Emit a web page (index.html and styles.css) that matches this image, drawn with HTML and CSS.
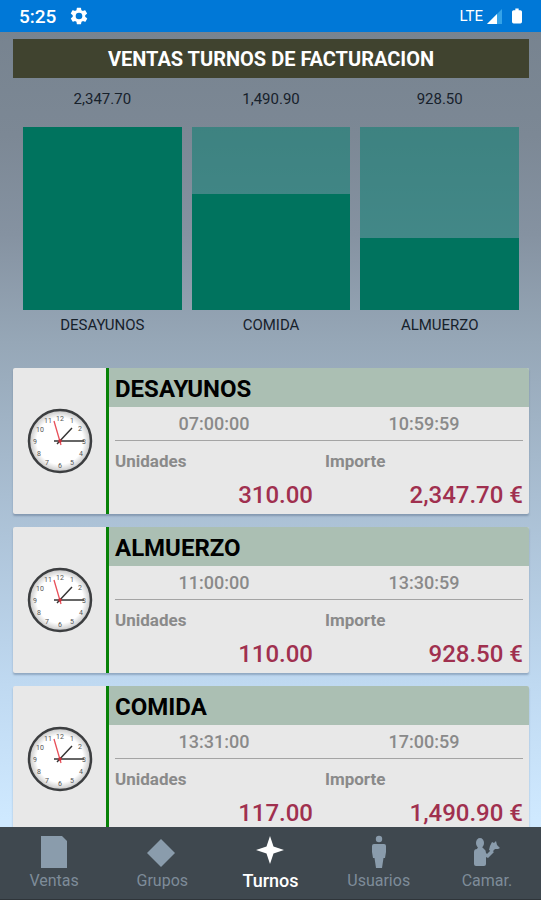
FILE: index.html
```
<!DOCTYPE html>
<html lang="es">
<head>
    <meta charset="UTF-8">
    <meta name="viewport" content="width=device-width, initial-scale=1.0">
    <title>Ventas turnos de facturacion</title>
    <link rel="stylesheet" href="styles.css">
</head>
<body>
    <!-- Esfera del reloj, compartida por todas las tarjetas -->
    <svg class="defs" aria-hidden="true">
        <defs>
            <radialGradient id="esfera">
                <stop offset="0.75" stop-color="#ffffff"/>
                <stop offset="1" stop-color="#c4c4c4"/>
            </radialGradient>
            <symbol id="reloj" viewBox="0 0 66 66">
                <circle cx="33" cy="33" r="31" fill="url(#esfera)" stroke="#3c3e40" stroke-width="2.500"/>
                <g class="reloj-numeros">
                    <text x="33" y="13">12</text>
                    <text x="45" y="15">1</text>
                    <text x="53" y="23">2</text>
                    <text x="57" y="36">3</text>
                    <text x="54" y="48">4</text>
                    <text x="45" y="57">5</text>
                    <text x="33" y="60">6</text>
                    <text x="20" y="57">7</text>
                    <text x="12" y="48">8</text>
                    <text x="8" y="36">9</text>
                    <text x="13" y="24">10</text>
                    <text x="21" y="15">11</text>
                </g>
                <path d="M30 36L45 20" stroke="#333" stroke-width="1.400"/>
                <path d="M27 33H57" stroke="#333" stroke-width="1.600"/>
                <path d="M34 37L27 13" stroke="#e8505a" stroke-width="1.300"/>
                <circle cx="33" cy="33" r="1.800" fill="#c9303c"/>
            </symbol>
        </defs>
    </svg>

    <div class="app">
        <header class="status-bar">
            <span class="hora">5:25</span>
            <svg class="icono-ajustes" viewBox="0 0 24 24" width="20" height="20" fill="#fff">
                <path d="M19.4 13a7.5 7.5 0 0 0 0-2l2.1-1.6c.2-.2.2-.4.1-.6l-2-3.5c-.1-.2-.4-.3-.6-.2l-2.5 1a7.300 7.300 0 0 0-1.700-1l-.4-2.600a.5.5 0 0 0-.5-.5h-4a.5.5 0 0 0-.5.4L9 5a7.700 7.700 0 0 0-1.700 1l-2.400-1c-.3 0-.5 0-.7.200l-2 3.500c0 .2 0 .5.2.6L4.500 11a7.900 7.900 0 0 0 0 2l-2.100 1.600c-.2.2-.2.4-.1.6l2 3.500c.1.2.4.3.6.2l2.400-1a7.300 7.300 0 0 0 1.700 1l.4 2.600c0 .3.2.5.5.5h4c.3 0 .5-.2.5-.5L15 19a7.700 7.700 0 0 0 1.700-1l2.400 1c.3 0 .5 0 .7-.2l2-3.500c0-.2 0-.5-.2-.6zM12 16a4 4 0 1 1 0-8 4 4 0 0 1 0 8z"/>
            </svg>
            <span class="red">LTE</span>
            <svg viewBox="0 0 16 16" width="16" height="16">
                <path d="M15 1V16H0z" fill="#35a3e8"/>
                <path d="M10 6V16H0z" fill="#fff"/>
            </svg>
            <svg class="bateria" viewBox="0 0 12 18" width="10" height="18" fill="#fff">
                <path d="M4 0h4v2h2q2 0 2 2v12q0 2-2 2H2q-2 0-2-2V4q0-2 2-2h2z"/>
            </svg>
        </header>

        <main class="contenido">
            <h1>VENTAS TURNOS DE FACTURACION</h1>

            <section class="grafico" aria-label="Ventas por turno">
                <div class="columna">
                    <span class="columna-texto">2,347.70</span>
                    <div class="barra"><div class="barra-valor" style="height: 100%"></div></div>
                    <span class="columna-texto">DESAYUNOS</span>
                </div>
                <div class="columna">
                    <span class="columna-texto">1,490.90</span>
                    <div class="barra"><div class="barra-valor" style="height: 63.5%"></div></div>
                    <span class="columna-texto">COMIDA</span>
                </div>
                <div class="columna">
                    <span class="columna-texto">928.50</span>
                    <div class="barra"><div class="barra-valor" style="height: 39.5%"></div></div>
                    <span class="columna-texto">ALMUERZO</span>
                </div>
            </section>

            <section class="lista">
                <article class="turno">
                    <div class="turno-icono"><svg width="66" height="66"><use href="#reloj"/></svg></div>
                    <div class="turno-datos">
                        <h2>DESAYUNOS</h2>
                        <div class="fila horas"><span>07:00:00</span><span>10:59:59</span></div>
                        <div class="fila etiquetas"><span>Unidades</span><span>Importe</span></div>
                        <div class="fila valores"><span>310.00</span><span>2,347.70 €</span></div>
                    </div>
                </article>
                <article class="turno">
                    <div class="turno-icono"><svg width="66" height="66"><use href="#reloj"/></svg></div>
                    <div class="turno-datos">
                        <h2>ALMUERZO</h2>
                        <div class="fila horas"><span>11:00:00</span><span>13:30:59</span></div>
                        <div class="fila etiquetas"><span>Unidades</span><span>Importe</span></div>
                        <div class="fila valores"><span>110.00</span><span>928.50 €</span></div>
                    </div>
                </article>
                <article class="turno">
                    <div class="turno-icono"><svg width="66" height="66"><use href="#reloj"/></svg></div>
                    <div class="turno-datos">
                        <h2>COMIDA</h2>
                        <div class="fila horas"><span>13:31:00</span><span>17:00:59</span></div>
                        <div class="fila etiquetas"><span>Unidades</span><span>Importe</span></div>
                        <div class="fila valores"><span>117.00</span><span>1,490.90 €</span></div>
                    </div>
                </article>
            </section>
        </main>

        <nav class="menu">
            <a href="#ventas">
                <svg viewBox="0 0 36 36" width="36" height="36"><path d="M5 2H26L31 7V34H5z"/></svg>
                Ventas
            </a>
            <a href="#grupos">
                <svg viewBox="0 0 36 36" width="36" height="36"><path d="M17 5L31 19L17 33L3 19z"/></svg>
                Grupos
            </a>
            <a href="#turnos" class="activo">
                <svg viewBox="0 0 36 36" width="36" height="36"><path d="M17 2L20.500 12.500L31 16L20.500 19.500L17 30L13.500 19.500L3 16L13.500 12.500z"/></svg>
                Turnos
            </a>
            <a href="#usuarios">
                <svg viewBox="0 0 36 36" width="36" height="36">
                    <circle cx="18" cy="5" r="3.200"/>
                    <path d="M13 10H23Q25 10 25 12V18L24 24H22.500L21 34H15L13.500 24H12L11 18V12Q11 10 13 10z"/>
                </svg>
                Usuarios
            </a>
            <a href="#camareros">
                <svg viewBox="0 0 36 36" width="36" height="36">
                    <ellipse cx="11" cy="9" rx="4" ry="5"/>
                    <path d="M9 13H13L15 15Q17 16 17 19L18 20L22 16L25 18L19 24L17 23V30Q17 32 15 32H7Q5 32 5 30V18Q5 15 8 15z"/>
                    <path d="M20 16L21 12L23 8L25 9L27 7L28 11L31 14L29 15L26 15L23 18z"/>
                </svg>
                Camar.
            </a>
        </nav>
    </div>
</body>
</html>
```
FILE: styles.css
```
* {
    box-sizing: border-box;
}

body {
    margin: 0;
    font-family: Roboto, sans-serif;
    color: #000;
}

.defs {
    position: absolute;
    width: 0;
    height: 0;
}

.reloj-numeros {
    font-size: 7px;
    fill: #555;
    text-anchor: middle;
}

.app {
    display: flex;
    flex-direction: column;
    height: 100vh;
    background: linear-gradient(#76828e 0%, #7c8895 15%, #8592a1 26%, #96a7b7 38%, #a9bed2 55%, #bfd9f1 76%, #cfe9ff 91%);
}

/* Barra de estado */
.status-bar {
    display: flex;
    align-items: center;
    flex-shrink: 0;
    height: 32px;
    padding: 0 19px;
    background-color: #0078d7;
    color: #fff;
}

.hora {
    font-size: 19px;
    font-weight: 500;
}

.icono-ajustes {
    margin-left: 13px;
}

.red {
    margin-left: auto;
    margin-right: 4px;
    font-size: 15px;
}

.bateria {
    margin-left: 9px;
}

/* Contenido */
.contenido {
    flex: 1;
    min-height: 0;
    padding: 7px 12px 0 13px;
    overflow-y: auto;
    scrollbar-width: none;
}

h1 {
    margin: 0;
    padding-top: 1px;
    background-color: #40432f;
    color: #fff;
    font-size: 20px;
    font-weight: 700;
    line-height: 38px;
    text-align: center;
}

.grafico {
    display: flex;
    gap: 10px;
    padding: 6px 10px 28px;
}

.columna {
    flex: 1;
    text-align: center;
}

.columna-texto {
    display: block;
    font-size: 15px;
    line-height: 30px;
    color: #17212b;
}

.barra {
    display: flex;
    align-items: flex-end;
    height: 183px;
    margin-top: 13px;
    background-color: rgba(0, 125, 110, 0.5);
}

.barra-valor {
    width: 100%;
    background-color: #00735e;
}

/* Tarjetas */
.lista {
    display: flex;
    flex-direction: column;
    gap: 13px;
    padding-bottom: 13px;
}

.turno {
    display: flex;
    background-color: #e8e8e8;
    border-radius: 2px;
    overflow: hidden;
    box-shadow: 0 2px 2px rgba(60, 80, 110, 0.35);
}

.turno-icono {
    display: flex;
    align-items: center;
    justify-content: center;
    flex-shrink: 0;
    width: 96px;
    border-right: 3px solid #078207;
}

.turno-datos {
    flex: 1;
    padding-bottom: 4px;
}

h2 {
    margin: 0;
    padding: 3px 6px 0;
    background-color: #abbfb3;
    font-size: 24px;
    font-weight: 700;
    line-height: 36px;
}

.fila {
    display: grid;
    grid-template-columns: 1fr 1fr;
    column-gap: 12px;
    margin: 0 6px;
}

.horas {
    padding-top: 1px;
    border-bottom: 1px solid #a4a4a4;
    color: #8a8a8a;
    font-size: 18px;
    font-weight: 500;
    line-height: 32px;
    text-align: center;
}

.etiquetas {
    color: #8a8a8a;
    font-size: 17px;
    font-weight: 700;
    line-height: 40px;
}

.valores {
    color: #a0304f;
    font-size: 24px;
    font-weight: 500;
    line-height: 29px;
    text-align: right;
}

/* Menú inferior */
.menu {
    display: flex;
    flex-shrink: 0;
    height: 73px;
    background-color: #3f484f;
    border-bottom: 1px solid #2f353a;
}

.menu a {
    display: flex;
    flex: 1;
    flex-direction: column;
    align-items: center;
    padding-top: 7px;
    color: #7e8c99;
    fill: #8a9cac;
    font-size: 16px;
    line-height: 22px;
    text-decoration: none;
}

.menu .activo {
    color: #fff;
    fill: #fff;
    font-size: 18px;
    font-weight: 500;
}
```
